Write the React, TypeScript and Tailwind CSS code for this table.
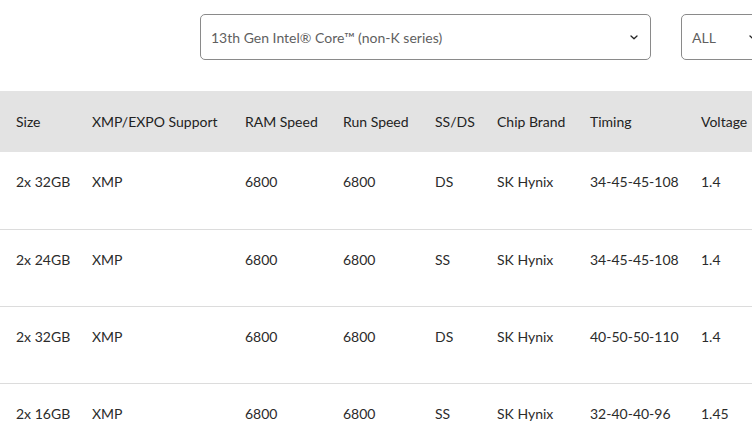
const columns = ["Size", "XMP/EXPO Support", "RAM Speed", "Run Speed", "SS/DS", "Chip Brand", "Timing", "Voltage"];

const rows = [
  ["2x 32GB", "XMP", "6800", "6800", "DS", "SK Hynix", "34-45-45-108", "1.4"],
  ["2x 24GB", "XMP", "6800", "6800", "SS", "SK Hynix", "34-45-45-108", "1.4"],
  ["2x 32GB", "XMP", "6800", "6800", "DS", "SK Hynix", "40-50-50-110", "1.4"],
  ["2x 16GB", "XMP", "6800", "6800", "SS", "SK Hynix", "32-40-40-96", "1.45"],
];

const grid = "grid grid-cols-[76px_153px_98px_92px_62px_93px_111px_120px] pl-4";

function Chevron() {
  return (
    <svg width="8" height="5" viewBox="0 0 8 5" fill="none" className="shrink-0">
      <path d="M1 1 4 3.8 7 1" stroke="#222" strokeWidth="1.3" strokeLinecap="round" strokeLinejoin="round" />
    </svg>
  );
}

function Select({ label, className }: { label: string; className: string }) {
  return (
    <div className={`flex h-[46px] shrink-0 items-center justify-between rounded-[5px] border border-[#8a8a8a] bg-white pl-[10px] pr-[12px] ${className}`}>
      <span className="text-[14px] text-[#5f5f5f]">{label}</span>
      <Chevron />
    </div>
  );
}

export default function App() {
  return (
    <div className="h-[436px] w-[752px] overflow-hidden bg-white font-['Lato','Noto_Sans',sans-serif] text-[14px]">
      <div className="flex gap-[30px] pl-[200px] pt-[14px]">
        <Select label="13th Gen Intel® Core™ (non-K series)" className="w-[451px]" />
        <Select label="ALL" className="w-[89px]" />
      </div>
      <div className="mt-[31px] w-[820px]">
        <div className={`${grid} h-[61px] items-center bg-[#e3e3e3] text-[#222]`}>
          {columns.map((c) => (
            <div key={c} className="whitespace-nowrap">{c}</div>
          ))}
        </div>
        {rows.map((r, i) => (
          <div
            key={i}
            className={`${grid} ${i === 0 ? "h-[78px]" : "h-[77px]"} items-start border-b border-[#dcdcdc] pt-[20px] leading-[20px] text-[#2b2b2b]`}
          >
            {r.map((v, j) => (
              <div key={j} className="whitespace-nowrap">{v}</div>
            ))}
          </div>
        ))}
      </div>
    </div>
  );
}
